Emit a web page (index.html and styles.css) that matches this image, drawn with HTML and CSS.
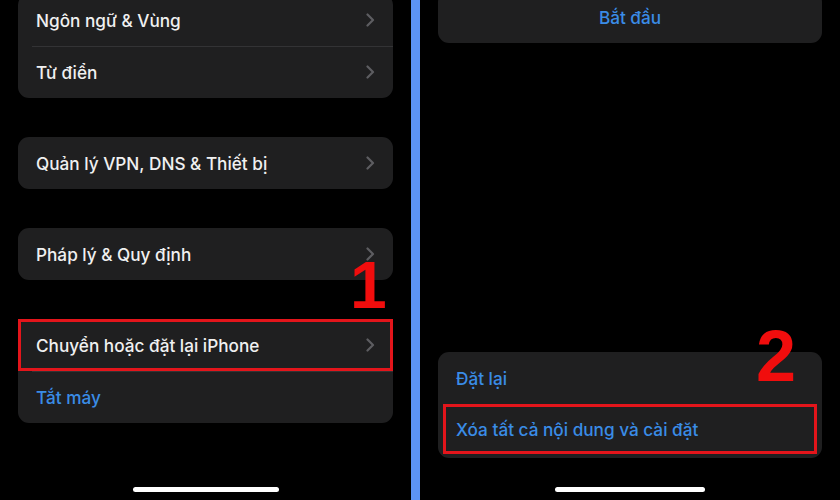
FILE: index.html
```html
<!DOCTYPE html>
<html lang="vi">

<head>
    <meta charset="UTF-8">
    <title>Cài đặt chung</title>
    <link rel="stylesheet" href="styles.css">
</head>

<body>

    <main class="screens">

        <!-- man hinh 1 -->
        <section class="phone left">
            <div class="group first">
                <div class="row">
                    <span>Ngôn ngữ &amp; Vùng</span>
                    <svg class="chevron" viewBox="0 0 9 14"><path d="M1.5 1.5l5.5 5.5-5.5 5.5"/></svg>
                </div>
                <div class="row">
                    <span>Từ điển</span>
                    <svg class="chevron" viewBox="0 0 9 14"><path d="M1.5 1.5l5.5 5.5-5.5 5.5"/></svg>
                </div>
            </div>

            <div class="group">
                <div class="row">
                    <span>Quản lý VPN, DNS &amp; Thiết bị</span>
                    <svg class="chevron" viewBox="0 0 9 14"><path d="M1.5 1.5l5.5 5.5-5.5 5.5"/></svg>
                </div>
            </div>

            <div class="group">
                <div class="row">
                    <span>Pháp lý &amp; Quy định</span>
                    <svg class="chevron" viewBox="0 0 9 14"><path d="M1.5 1.5l5.5 5.5-5.5 5.5"/></svg>
                </div>
            </div>

            <div class="group">
                <div class="row marked">
                    <span>Chuyển hoặc đặt lại iPhone</span>
                    <svg class="chevron" viewBox="0 0 9 14"><path d="M1.5 1.5l5.5 5.5-5.5 5.5"/></svg>
                </div>
                <div class="row link">
                    <span>Tắt máy</span>
                </div>
            </div>

            <div class="spacer"></div>
            <div class="home-bar"></div>

            <span class="step one">1</span>
        </section>

        <div class="divider"></div>

        <!-- man hinh 2 -->
        <section class="phone right">
            <div class="group top">
                <div class="row link center">
                    <span>Bắt đầu</span>
                </div>
            </div>

            <div class="spacer"></div>

            <div class="group reset">
                <div class="row link">
                    <span>Đặt lại</span>
                </div>
                <div class="row link marked inset">
                    <span>Xóa tất cả nội dung và cài đặt</span>
                </div>
            </div>

            <div class="home-bar"></div>

            <span class="step two">2</span>
        </section>

    </main>

</body>

</html>
```

FILE: styles.css
```css
body {
    margin: 0;
    background-color: #000;
    font-family: Inter, "Noto Sans", sans-serif;
    overflow: hidden;
}

.screens {
    display: flex;
    width: 840px;
    height: 500px;
}

.phone {
    position: relative;
    display: flex;
    flex-direction: column;
    padding: 0 18px;
    height: 500px;
    box-sizing: border-box;
}

.left {
    width: 411px;
}

.right {
    width: 420px;
}

.divider {
    width: 9px;
    background-color: #5c93f5;
}

.group {
    background-color: #1f1f20;
    border-radius: 11px;
    margin-top: 39px;
}

.group.first {
    margin-top: -6px;
}

.group.top {
    margin-top: -9px;
}

.row {
    display: flex;
    align-items: center;
    justify-content: space-between;
    height: 52px;
    padding: 0 18px;
    color: #f0f0f0;
    font-size: 17.2px;
    font-weight: 500;
    position: relative;
    box-sizing: border-box;
}

/* duong ke giua cac dong */
.row + .row::before {
    content: "";
    position: absolute;
    top: 0;
    left: 14px;
    right: 0;
    height: 1px;
    background-color: #333335;
}

.row.link {
    color: #3a8ce6;
}

.row.center {
    justify-content: center;
}

.chevron {
    width: 9px;
    height: 14px;
    fill: none;
    stroke: #5d5d61;
    stroke-width: 2.2;
    stroke-linecap: round;
    stroke-linejoin: round;
}

.row.marked {
    border: 3px solid #e3151b;
    padding-left: 15px;
    padding-right: 15px;
}

.row.marked::before {
    display: none;
}

.group.reset .row {
    height: 52px;
}

.row.inset {
    margin: 0 5px 4px;
    height: 50px !important;
    padding-left: 10px;
}

.spacer {
    flex: 1;
}

.home-bar {
    width: 146px;
    height: 5px;
    border-radius: 3px;
    background-color: #fff;
    margin: 61px auto 8px;
    flex-shrink: 0;
}

.right .home-bar {
    margin-top: 29px;
    width: 150px;
}

.left .home-bar {
    margin-top: 0;
}

.step {
    position: absolute;
    color: #f10d0d;
    font-family: "Liberation Sans", Arial, sans-serif;
    font-weight: 700;
    line-height: 1;
}

.step.one {
    font-size: 66px;
    left: 350px;
    top: 252px;
}

.step.two {
    font-size: 72px;
    left: 336px;
    top: 320px;
}
```
